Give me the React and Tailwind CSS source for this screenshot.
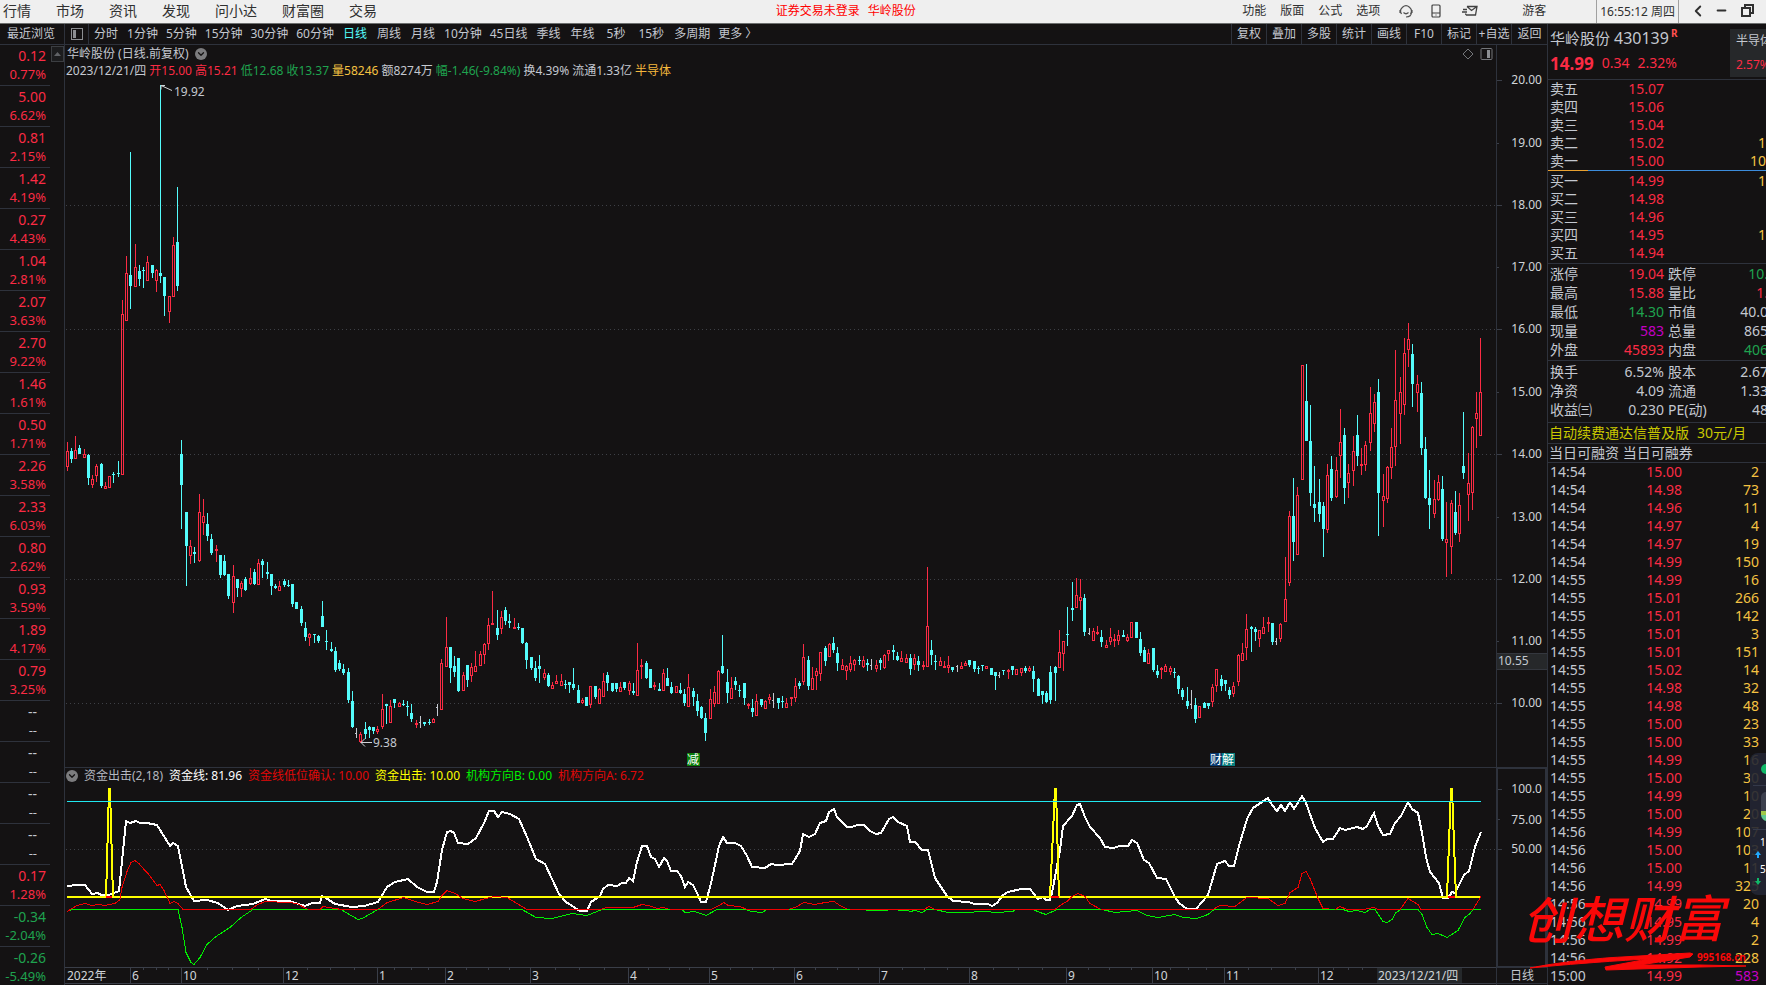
import { Fragment } from 'react'
import { ChevronDown, ChevronLeft, Minus } from 'lucide-react'

const MENU = ['行情', '市场', '资讯', '发现', '问小达', '财富圈', '交易']
const MENU_RIGHT = ['功能', '版面', '公式', '选项']

const PERIODS = [
  '分时', '1分钟', '5分钟', '15分钟', '30分钟', '60分钟', '日线', '周线', '月线',
  '10分钟', '45日线', '季线', '年线', '5秒', '15秒', '多周期', '更多 〉',
]
const ROOMY = ['分时', '日线', '周线', '月线', '季线', '年线']
const TOOLS = ['复权', '叠加', '多股', '统计', '画线', 'F10', '标记', '+自选', '返回']

const RECENT = [
  ['0.12', '0.77%'], ['5.00', '6.62%'], ['0.81', '2.15%'], ['1.42', '4.19%'],
  ['0.27', '4.43%'], ['1.04', '2.81%'], ['2.07', '3.63%'], ['2.70', '9.22%'],
  ['1.46', '1.61%'], ['0.50', '1.71%'], ['2.26', '3.58%'], ['2.33', '6.03%'],
  ['0.80', '2.62%'], ['0.93', '3.59%'], ['1.89', '4.17%'], ['0.79', '3.25%'],
  ['--', '--'], ['--', '--'], ['--', '--'], ['--', '--'],
  ['0.17', '1.28%'], ['-0.34', '-2.04%'], ['-0.26', '-5.49%'],
]

const QUOTE = [
  ['2023/12/21/四', 'text-[#c4c8d0]'],
  ['开15.00', 'text-[#fb2b44]'],
  ['高15.21', 'text-[#fb2b44]'],
  ['低12.68', 'text-[#1fa34f]'],
  ['收13.37', 'text-[#1fa34f]'],
  ['量58246', 'text-[#f5c242]'],
  ['额8274万', 'text-[#c4c8d0]'],
  ['幅-1.46(-9.84%)', 'text-[#1fa34f]'],
  ['换4.39%', 'text-[#c4c8d0]'],
  ['流通1.33亿', 'text-[#c4c8d0]'],
  ['半导体', 'text-[#f5b83d]'],
]

const INDICATORS = [
  ['资金出击(2,18)', 'text-[#b4b8c0]'],
  ['资金线: 81.96', 'text-white'],
  ['资金线低位确认: 10.00', 'text-[#e00808]'],
  ['资金出击: 10.00', 'text-[#ffff00]'],
  ['机构方向B: 0.00', 'text-[#00f000]'],
  ['机构方向A: 6.72', 'text-[#e00808]'],
]

const SELLS = [['卖五', '15.07', ''], ['卖四', '15.06', ''], ['卖三', '15.04', ''], ['卖二', '15.02', '1'], ['卖一', '15.00', '10']]
const BUYS = [['买一', '14.99', '1'], ['买二', '14.98', ''], ['买三', '14.96', ''], ['买四', '14.95', '1'], ['买五', '14.94', '']]

const RED = 'text-[#fb2b44]'
const GREEN = 'text-[#1fa34f]'
const GREY = 'text-[#c4c8d0]'

const STATS = [
  ['涨停', '19.04', RED, '跌停', '10.', GREEN],
  ['最高', '15.88', RED, '量比', '1.', RED],
  ['最低', '14.30', GREEN, '市值', '40.0', GREY],
  ['现量', '583', 'text-[#c400c4]', '总量', '865', GREY],
  ['外盘', '45893', RED, '内盘', '406', GREEN],
]
const FUNDAMENTALS = [
  ['换手', '6.52%', GREY, '股本', '2.67', GREY],
  ['净资', '4.09', GREY, '流通', '1.33', GREY],
  ['收益㈢', '0.230', GREY, 'PE(动)', '48', GREY],
]

const TICKS = [
  ['14:54', '15.00', 2], ['14:54', '14.98', 73], ['14:54', '14.96', 11], ['14:54', '14.97', 4],
  ['14:54', '14.97', 19], ['14:54', '14.99', 150], ['14:55', '14.99', 16], ['14:55', '15.01', 266],
  ['14:55', '15.01', 142], ['14:55', '15.01', 3], ['14:55', '15.01', 151], ['14:55', '15.02', 14],
  ['14:55', '14.98', 32], ['14:55', '14.98', 48], ['14:55', '15.00', 23], ['14:55', '15.00', 33],
  ['14:55', '14.99', 16], ['14:55', '15.00', 30], ['14:55', '14.99', 10], ['14:55', '15.00', 20],
  ['14:56', '14.99', 107], ['14:56', '15.00', 103], ['14:56', '15.00', 11], ['14:56', '14.99', 325],
  ['14:56', '14.99', 20], ['14:56', '14.95', 4], ['14:56', '14.99', 2], ['14:56', '14.92', 228],
  ['15:00', '14.99', 583],
]

// One candle per entry: direction (u up, d down, w unchanged), then high/body top/body bottom/low
const CANDLES = `
u442/451/467/471 d448/451/459/463 u436/450/459/459 d445/448/454/454 u449/454/458/458
d454/455/478/485 u475/479/485/488 u464/466/476/482 d463/464/486/488 u482/486/489/489
u476/476/488/488 d472/474/475/483 d461/473/474/477 u300/314/475/475 u256/273/321/321
d152/275/286/309 u244/267/287/287 d265/271/279/286 d267/270/271/288 u256/262/281/281
d265/265/273/278 u269/270/281/292 d85/273/276/283 d277/277/296/316 u296/296/312/323
u237/245/297/297 d187/242/286/291 d440/454/485/529 d512/512/546/586 u540/546/556/564
d547/552/554/563 u494/512/561/562 u499/516/523/535 d513/524/536/541 d534/539/553/555
u545/549/550/562 d555/555/575/578 d555/561/575/576 d574/574/596/599 u565/576/603/613
d579/579/588/597 u581/583/589/597 d577/579/590/591 u568/578/584/585 d569/572/584/585
u559/563/585/585 d559/561/565/578 d562/572/574/579 d574/574/586/595 d584/586/588/589
u581/586/591/591 d579/581/585/587 d580/585/586/587 d584/584/604/607 d602/602/609/609
d606/609/623/626 d622/628/637/641 u633/634/638/646 d634/634/635/643 d635/636/641/643
d601/616/627/627 d630/641/642/650 d642/649/651/652 d647/651/670/672 d660/663/669/671
d664/669/673/675 d668/672/700/703 d691/701/727/728 w728/733/734/738 u732/734/742/743
d722/729/734/739 d726/727/730/738 d727/727/731/734 u726/729/732/734 u694/709/727/729
d704/704/706/724 u700/706/723/723 d699/699/703/708 u702/703/707/707 d700/704/705/706
d701/706/707/716 d704/713/719/722 u720/723/724/728 w716/722/723/728 d722/722/724/726
d719/722/723/725 u718/719/723/723 w704/707/708/716 u659/663/710/710 u617/647/667/667
d647/647/668/683 d656/666/672/677 d658/658/691/692 u672/675/691/691 d665/665/680/687
u663/667/676/682 u651/666/672/672 u651/654/666/666 u643/644/655/664 u618/625/644/650
u591/623/625/625 d610/628/635/640 u611/617/629/634 d607/610/621/625 d614/621/623/628
u618/627/629/629 d623/627/628/630 d628/628/643/644 d642/643/660/669 d657/657/668/670
d661/668/678/681 d655/666/669/683 u669/673/678/680 d673/675/686/687 u682/685/689/689
u675/681/684/684 u674/681/686/686 d680/684/685/689 d682/682/685/693 d668/684/688/690
d685/690/703/703 u698/700/703/704 d697/697/706/706 u686/686/705/708 d686/686/697/699
u688/689/704/704 u673/681/697/697 d672/675/683/691 d683/683/691/692 d683/683/689/692
u682/687/692/692 d682/682/688/690 u681/683/691/695 d683/691/693/695 u643/670/696/696
u659/665/667/679 d661/663/678/679 d669/669/688/688 u682/685/687/690 d683/689/691/691
u669/673/691/691 d668/678/686/686 d682/687/693/694 u686/686/693/693 d683/690/693/694
d689/694/703/706 u674/687/707/707 d688/691/697/706 d694/701/711/716 d706/707/718/719
d713/718/733/741 u689/699/719/719 u686/692/704/707 u670/671/704/704 d635/666/673/674
d669/682/693/703 u677/688/699/699 d677/681/685/690 d685/690/691/697 d683/683/698/705
u703/704/705/709 d699/708/712/717 u694/701/716/716 d699/699/705/707 u700/701/709/709
u694/697/700/704 w693/700/701/708 d698/698/703/709 d696/701/702/708 u698/703/708/708
u697/697/699/706 u678/686/698/702 d681/683/686/689 u644/657/682/685 d656/660/686/690
u667/678/690/690 u668/671/676/690 u652/652/674/681 d646/648/661/666 u643/644/657/657
d637/643/650/653 d647/653/663/671 u659/665/670/670 u665/666/671/680 u656/663/670/672
u659/660/665/671 d656/660/661/665 u656/660/667/668 d659/663/665/671 w659/665/666/670
u660/665/669/672 d658/660/663/670 u654/655/668/669 u650/650/654/661 d645/650/652/660
d652/656/660/661 u651/658/662/662 u654/658/663/663 d654/658/669/675 u654/658/665/670
d656/661/665/671 u661/665/667/670 u567/626/667/667 d640/650/655/665 d655/661/662/670
u657/661/666/666 u661/666/668/668 u656/665/668/673 d667/667/670/672 w665/666/667/672
u662/666/669/669 u661/663/666/666 d660/660/665/667 d661/661/669/672 d666/668/669/674
d665/665/666/671 u666/666/669/669 d668/668/675/675 d672/672/676/690 w672/675/676/678
d670/670/671/675 u669/670/671/679 d666/666/670/675 u669/669/675/675 u668/668/673/676
d666/668/671/673 u666/668/671/672 d666/671/679/692 d678/679/696/696 d691/691/695/704
d691/693/702/703 d666/672/700/704 d666/667/673/701 u630/652/668/668 u641/641/654/671
d607/634/635/646 d582/608/610/621 u578/595/608/608 u579/597/601/610 d594/598/632/636
w628/633/634/635 u628/631/641/641 u626/632/634/635 d630/637/642/647 u640/645/648/648
u628/637/642/645 u634/639/641/647 u630/635/641/645 d630/635/637/637 u634/637/641/642
u622/622/638/638 d622/622/638/638 d632/639/653/656 d647/650/662/662 u649/653/664/664
d648/648/670/672 d665/671/675/678 u667/668/670/679 u664/666/672/672 u666/668/672/675
d668/672/673/678 d675/676/689/694 d688/690/697/700 d687/701/706/709 w690/704/705/709
d698/705/719/723 u706/706/718/718 d702/703/708/708 d703/703/706/709 u684/687/702/707
u669/669/686/692 d675/679/686/691 d680/680/684/691 d687/690/695/699 u682/686/694/697
u654/655/682/686 u643/653/661/661 u614/629/648/660 d626/627/629/652 d627/629/632/641
u630/630/639/647 u617/627/634/634 u617/622/624/632 d623/623/642/645 w638/641/642/645
u623/624/639/642 u557/599/622/622 u511/516/583/586 d478/516/542/561 u487/495/555/555
u365/365/480/480 d364/401/441/441 d405/441/493/506 d466/504/508/522 d479/502/514/522
d502/506/529/557 u464/475/530/533 d456/469/498/501 u457/470/497/498 u409/442/456/478
d428/435/488/504 u464/473/483/498 u436/451/471/486 d415/435/456/466 u448/464/466/475
u441/445/465/471 u387/413/443/451 u394/402/424/432 d379/392/493/536 u474/496/501/527
u466/467/499/503 u428/447/468/479 u350/400/447/466 u377/392/414/444 u338/353/405/415
u323/339/350/367 d344/354/384/407 u375/384/393/412 d382/393/448/455 d437/449/498/499
d470/498/505/529 u480/499/514/518 u475/482/500/501 d476/489/539/541 u502/539/543/577
u500/503/547/574 d491/512/533/535 u493/505/534/542 d412/466/473/479 u453/483/495/521
u426/427/493/510 u392/413/419/448 u338/392/436/436
`.trim().split(/\s+/).map((c, i) => {
  const [high, top, bottom, low] = c.slice(1).split('/').map(Number)
  return { dir: c[0], x: Math.floor(67 + i * 4.259), high, top, bottom, low }
})

const CANDLE_COLORS = { u: '#fb2b44', d: '#54fcfc', w: '#c4c8d0' }

const FUND_LINE = `67,886 77,885 85,885 92,894 98,893 101,895 109,895 119,891 126,821 130,823 136,821 140,823 147,823 157,825
170,846 173,843 178,846 186,887 194,901 207,900 218,903 228,910 237,906 253,904 265,899 272,901 289,901 305,906 312,903
320,903 322,896 326,898 335,904 352,907 364,906 378,902 387,887 395,882 408,879 417,887 427,892 434,892 437,882 442,850
447,832 451,831 454,833 458,843 468,844 476,838 484,823 489,811 494,811 498,817 502,812 510,814 519,819 527,837 536,859
545,864 559,894 566,902 580,911 587,911 591,902 600,896 603,889 608,885 617,886 622,883 626,883 629,878 633,881 637,862
642,846 647,846 651,857 655,859 659,867 664,858 667,861 671,871 677,871 681,876 685,887 688,882 693,885 698,895 701,902
706,902 711,883 715,865 719,846 723,837 727,843 735,843 741,846 747,856 752,867 765,868 771,864 777,865 792,864 800,851
803,834 809,837 815,834 820,823 826,821 829,812 834,809 837,817 847,827 852,827 857,825 864,825 870,831 876,834 881,833
889,819 893,817 898,822 907,826 910,842 915,842 922,850 928,850 935,878 947,896 953,901 968,902 975,904 988,904 992,906
997,903 1003,895 1008,892 1021,889 1030,889 1038,899 1043,897 1046,900 1050,900 1052,893 1060,850 1063,826 1072,816
1077,805 1080,804 1085,817 1090,827 1100,838 1105,847 1113,848 1120,846 1128,846 1132,840 1137,843 1144,860 1149,863
1157,878 1166,879 1175,897 1179,903 1187,909 1196,909 1208,895 1217,864 1225,861 1229,866 1234,866 1239,846 1247,819
1253,808 1262,802 1268,798 1272,805 1277,811 1281,805 1285,811 1290,802 1294,809 1302,796 1306,803 1315,828 1323,842
1327,839 1333,839 1340,828 1345,830 1357,827 1363,829 1367,826 1374,813 1378,826 1383,835 1390,834 1395,823 1401,816
1408,802 1412,809 1418,813 1422,833 1426,857 1430,872 1439,883 1443,898 1448,898 1452,892 1455,893 1464,875 1469,871
1475,847 1481,832`

const DIRECTION_A = `67,911 77,905 85,903 92,905 98,904 105,905 115,903 120,899 122,887 127,871 131,862 135,860 139,863 144,869
148,873 157,885 160,884 164,890 170,903 174,901 178,903 183,909 251,909 256,905 265,901 289,902 297,903 308,909 320,909
323,906 335,908 342,909 378,909 387,902 404,897 415,901 427,904 438,901 442,895 447,890 455,893 463,898 475,901 486,898
494,896 507,897 517,903 527,909 600,909 607,907 633,907 642,904 648,905 658,908 663,907 670,909 711,909 719,905 724,902
728,905 740,906 747,909 789,909 797,906 804,902 815,904 825,902 834,901 840,905 848,909 924,909 929,906 935,909 1055,909
1060,905 1067,901 1072,896 1078,893 1085,896 1090,903 1101,909 1213,909 1220,905 1235,906 1247,897 1268,898 1278,905
1285,903 1290,892 1298,887 1302,873 1306,871 1310,878 1318,898 1323,908 1335,909 1340,906 1347,909 1363,909 1374,907
1378,909 1400,909 1408,898 1418,904 1421,909 1473,909 1481,896`

const DIRECTION_B = `67,911 72,909 178,909 182,927 186,952 191,962 194,964 200,957 207,944 216,936 230,927 241,917 253,909 341,909
346,912 358,919 362,918 378,909 522,909 536,917 552,918 572,913 587,915 602,909 682,909 685,912 695,911 706,915 717,909
745,909 752,911 762,912 767,909 865,909 867,910 887,910 888,909 908,910 910,911 915,910 922,912 927,909 935,909 948,912
962,912 987,911 995,912 1013,911 1015,909 1033,909 1040,912 1046,914 1057,909 1102,909 1115,912 1137,910 1147,915 1158,917
1175,914 1183,917 1197,918 1208,914 1214,909 1343,909 1349,911 1357,910 1365,912 1370,909 1375,909 1379,915 1383,921
1387,922 1392,919 1396,912 1401,909 1418,909 1422,914 1427,927 1432,934 1438,933 1447,937 1458,930 1465,917 1470,913
1473,909 1481,909`

const MONTHS = [
  [130, '6'], [181, '10'], [283, '12'], [377, '1'], [445, '2'], [530, '3'], [628, '4'], [709, '5'],
  [794, '6'], [879, '7'], [969, '8'], [1066, '9'], [1152, '10'], [1224, '11'], [1318, '12'],
]

const PRICES = [
  [80, '20.00'], [143, '19.00'], [205, '18.00'], [267, '17.00'], [329, '16.00'], [392, '15.00'],
  [454, '14.00'], [517, '13.00'], [579, '12.00'], [641, '11.00'], [703, '10.00'],
]

function TopBar() {
  return (
    <header className="flex h-6 shrink-0 items-center border-b border-[#6c6e6e] bg-[#efefef] pb-0.5 text-xs leading-none text-[#303030]">
      <nav className="flex grow-10 basis-0 gap-[25px] pl-[3px] text-sm leading-none">
        {MENU.map(m => <button key={m} type="button">{m}</button>)}
      </nav>
      <p className="flex gap-2 text-[#ff0000]">
        <span>证券交易未登录</span>
        <span>华岭股份</span>
      </p>
      <div className="flex grow-11 basis-0 items-center justify-end">
        <nav className="flex gap-3.5">
          {MENU_RIGHT.map(m => <button key={m} type="button">{m}</button>)}
        </nav>
        <button type="button" aria-label="客服" className="ml-[19px]">
          <svg width="14" height="14" viewBox="0 0 14 14" fill="none" stroke="#505050" strokeWidth="1.2">
            <path d="M2.500 10A5.300 5.300 0 1 1 11.500 10M12.500 8c0 3-2 5-5.500 5M4.500 8.500q2.500 2.500 5 0M1 6v3M13 6v3" />
          </svg>
        </button>
        <button type="button" aria-label="手机" className="ml-[18px]">
          <svg width="10" height="14" viewBox="0 0 10 14" fill="none" stroke="#404040" strokeWidth="1.2">
            <rect x="1" y="1" width="8" height="12" rx="1" />
            <path d="M1 9h8M4.500 11h1" />
          </svg>
        </button>
        <button type="button" aria-label="消息" className="ml-[21px]">
          <svg width="16" height="14" viewBox="0 0 16 14" fill="none" stroke="#404040" strokeWidth="1.3">
            <path d="M5 2.500h10L13.500 11H4M5 2.500l4.500 4 5.500-4M1 5.500h4M0 8h5M4 11l-.5-1.500" />
          </svg>
        </button>
        <button type="button" className="ml-11">游客</button>
        <time className="-mb-0.5 ml-[50px] flex h-[23px] items-center border-x border-[#a0a0a0] px-[3px]">16:55:12 周四</time>
        <button type="button" aria-label="后退" className="ml-2.5"><ChevronLeft size={18} strokeWidth={2.5} /></button>
        <button type="button" aria-label="最小化" className="ml-2"><Minus size={13} strokeWidth={4} /></button>
        <button type="button" aria-label="还原" className="mr-3 ml-[13px]">
          <svg width="13" height="13" viewBox="0 0 13 13" fill="none" stroke="#303030" strokeWidth="2">
            <path d="M4 4V1h8v8H9M1 4h8v8H1z" />
          </svg>
        </button>
      </div>
    </header>
  )
}

function periodClass(name) {
  if (name === '日线') return 'px-px text-[#54fcfc]'
  if (name === '5秒') return 'px-[3px]'
  if (name === '15秒') return 'px-0.5'
  return ROOMY.includes(name) ? 'px-px' : ''
}

function Toolbar() {
  return (
    <div className="flex h-[21px] shrink-0 items-stretch border-b border-[#2e323c] text-xs leading-none">
      <button type="button" className="w-16 pr-0.5 text-center">最近浏览</button>
      <button type="button" aria-label="侧栏" className="flex w-[25px] items-center justify-center border-x border-[#2e323c]">
        <svg width="12" height="12" viewBox="0 0 12 12" fill="none" stroke="#8c8e92" shapeRendering="crispEdges">
          <rect x="0.5" y="0.5" width="11" height="11" />
          <rect x="2" y="2" width="3" height="8" fill="#8c8e92" stroke="none" />
        </svg>
      </button>
      <nav className="flex flex-1 items-center gap-2 pl-1">
        {PERIODS.map(p => <button key={p} type="button" className={periodClass(p)}>{p}</button>)}
      </nav>
      <nav className="flex">
        {TOOLS.map(t => (
          <button key={t} type="button" className="w-[35px] border-l border-[#2e323c] whitespace-nowrap last:w-9">{t}</button>
        ))}
      </nav>
    </div>
  )
}

function tone(value) {
  if (value === '--') return 'pr-[13px] text-[#c4c8d0]'
  return value.startsWith('-') ? 'pr-1 text-[#1fa34f]' : 'pr-1 text-[#fb2b44]'
}

function RecentList() {
  return (
    <div className="flex w-16 shrink-0 justify-between overflow-hidden">
      <ul className="w-[50px] text-right">
        {RECENT.map(([change, pct], i) => (
          <li key={i} className={'h-[41px] border-b border-[#2e323c] pt-px ' + tone(change)}>
            <div className="text-sm leading-[19px]">{change}</div>
            <div className="text-[13px] leading-[19px]">{pct}</div>
          </li>
        ))}
      </ul>
      <button type="button" aria-label="向上" className="mt-px flex h-4 w-[13px] items-center justify-center border border-[#3c3e42] bg-[#1c1c1e]">
        <svg width="7" height="4" viewBox="0 0 7 4" fill="#606266"><path d="M0 4 3.500 0 7 4z" /></svg>
      </button>
    </div>
  )
}

function Candle({ dir, x, high, top, bottom, low }) {
  const color = CANDLE_COLORS[dir]
  if (dir === 'u') {
    return (
      <g stroke={color} fill="none">
        {high < top && <path d={`M${x + 0.5} ${high}V${top}`} />}
        {low > bottom && <path d={`M${x + 0.5} ${bottom}V${low}`} />}
        <rect x={x - 0.5} y={top + 0.5} width="2" height={Math.max(bottom - top - 1, 1)} />
      </g>
    )
  }
  return (
    <g fill={color}>
      <rect x={x} y={high} width="1" height={low - high} />
      <rect x={x - 1} y={top} width={dir === 'w' ? 1 : 3} height={Math.max(bottom - top, 1)} />
    </g>
  )
}

function PriceChart() {
  return (
    <svg viewBox="65 79 1431 688" preserveAspectRatio="none" className="min-h-0 w-full flex-1 text-xs">
      <g shapeRendering="crispEdges">
        {[205, 329, 454, 579, 703].map(y => (
          <path key={y} d={`M66 ${y}.5H1496`} stroke="#3e4046" strokeDasharray="1 3" />
        ))}
        {CANDLES.map((c, i) => <Candle key={i} {...c} />)}
      </g>
      <g stroke="#d0d2d6" fill="none">
        <path d="M161 85.500l11 5M161 85.500h4M161 85.500v4" />
        <path d="M361 742.500h11M361 742.500l4-4M361 742.500l4 4" />
      </g>
      <g fill="#c4c8d0">
        <text x="174" y="96">19.92</text>
        <text x="373" y="747">9.38</text>
      </g>
      <rect x="687" y="753" width="13" height="13" fill="#087c08" />
      <rect x="1210" y="753" width="12" height="13" fill="#083a70" />
      <rect x="1222" y="753" width="13" height="13" fill="#088080" />
      <g fill="#fff">
        <text x="687" y="764">减</text>
        <text x="1210" y="764">财</text>
        <text x="1222" y="764">解</text>
      </g>
    </svg>
  )
}

function FundChart() {
  return (
    <svg viewBox="65 784 1431 183" preserveAspectRatio="none" className="h-[183px] w-full shrink-0" fill="none">
      <g shapeRendering="crispEdges">
        <path d="M66 849.500H1496" stroke="#3e4046" strokeDasharray="1 3" />
        <polyline points={FUND_LINE} stroke="#fff" strokeWidth="2" />
        <path d="M67 897H1481" stroke="#ff0000" strokeWidth="2" />
        <path
          d="M67 897H106L109 789H110L113 897H1050L1055 789H1056L1059 897H1447L1451 789H1452L1456 897H1481"
          stroke="#ffff00"
          strokeWidth="2"
        />
        <path d="M106 897h6M1052 897h7M1449 897h6" stroke="#ff0000" strokeWidth="2" />
        <path d="M67 801.500H1481" stroke="#20e8f0" />
        <g transform="translate(0 .5)">
          <polyline points={DIRECTION_B} stroke="#00f000" />
          <polyline points={DIRECTION_A} stroke="#f00000" />
          <path d="M72 909H178M253 909H308M378 909H522M604 909H670M717 909H745M789 909H850M1057 909H1101M1214 909H1335M1401 909H1418M1473 909H1481" stroke="#00f000" />
        </g>
      </g>
    </svg>
  )
}

function DateAxis() {
  return (
    <svg viewBox="65 967 1431 18" preserveAspectRatio="none" className="h-[18px] w-full shrink-0 text-xs">
      <rect x="1377" y="968" width="85" height="15" fill="#25282b" />
      <g stroke="#3a3e48" shapeRendering="crispEdges">
        <path d="M65 967.500H1496M65 983.500H1496" />
        {MONTHS.map(([x], i) => (
          <Fragment key={x}>
            <path d={`M${x}.5 968V983`} />
            {[1, 2, 3].map(n => {
              const next = MONTHS[i + 1]?.[0] ?? 1377
              const tx = Math.round(x + ((next - x) * n) / 4)
              return <path key={n} d={`M${tx}.5 968v2`} />
            })}
          </Fragment>
        ))}
      </g>
      <g fill="#d0d4d8">
        <text x="67" y="980">2022年</text>
        {MONTHS.map(([x, label]) => <text key={x} x={x + 2} y="980">{label}</text>)}
        <text x="1378" y="980">2023/12/21/四</text>
      </g>
    </svg>
  )
}

function ValueAxis() {
  return (
    <div className="flex w-[51px] shrink-0 flex-col border-l border-[#2e323c]">
      <svg viewBox="1497 45 50 722" preserveAspectRatio="none" className="min-h-0 w-full flex-1 text-xs">
        <g stroke="#3a3e48" shapeRendering="crispEdges">
          {PRICES.map(([y], i) => <path key={y} d={`M1497 ${y}.5h${i % 2 ? 2 : 5}`} />)}
        </g>
        <g fill="#d0d4d8" textAnchor="end">
          {PRICES.map(([y, label]) => <text key={y} x="1542" y={y + 4}>{label}</text>)}
        </g>
        <rect x="1497" y="653" width="50" height="17" fill="#26282a" />
        <path d="M1497 653.500h50M1497 669.500h50" stroke="#34373e" />
        <text x="1498" y="665" fill="#c4c8d0">10.55</text>
      </svg>
      <div className="h-[201px] border-2 border-l-1 border-[#2e323c]">
        <svg viewBox="1498 769 47 197" preserveAspectRatio="none" className="h-full w-full text-xs">
          <path d="M1498 789.500h4M1498 819.500h2M1498 849.500h4" stroke="#3a3e48" />
          <g fill="#d0d4d8" textAnchor="end">
            <text x="1542" y="793">100.0</text>
            <text x="1542" y="824">75.00</text>
            <text x="1542" y="853">50.00</text>
          </g>
        </svg>
      </div>
      <div className="mb-px h-4 border-b border-[#2e323c] text-center text-xs leading-[15px]">日线</div>
    </div>
  )
}

function ChartArea() {
  return (
    <main className="flex min-w-0 flex-1 flex-col border-l border-[#2e323c] text-xs leading-none">
      <div className="flex h-[17px] shrink-0 items-center pr-[3px] pl-0.5">
        <h1>华岭股份 (日线.前复权)</h1>
        <button type="button" aria-label="展开" className="ml-1.5 rounded-full bg-[#7c7c7e] p-px text-[#141213]">
          <ChevronDown size={10} strokeWidth={3} />
        </button>
        <svg width="31" height="12" viewBox="0 0 31 12" fill="none" stroke="#74767a" className="ml-auto">
          <path d="M1 6 6 1l5 5-5 5z" />
          <rect x="19" y="0.5" width="11" height="11" rx="1" />
          <rect x="25" y="2" width="3" height="8" fill="#8c8e92" stroke="none" />
        </svg>
      </div>
      <p className="flex h-[17px] shrink-0 items-center gap-[3px] pl-px whitespace-nowrap">
        {QUOTE.map(([text, color]) => <span key={text} className={color}>{text}</span>)}
      </p>
      <PriceChart />
      <div className="flex h-[17px] shrink-0 items-center gap-1.5 border-t border-[#2e323c] pl-px whitespace-nowrap">
        <button type="button" aria-label="指标" className="rounded-full bg-[#7c7c7e] p-px text-[#141213]">
          <ChevronDown size={10} strokeWidth={3} />
        </button>
        {INDICATORS.map(([text, color]) => <span key={text} className={color}>{text}</span>)}
      </div>
      <FundChart />
      <DateAxis />
    </main>
  )
}

function OrderTable({ rows }) {
  return (
    <table className="w-full table-fixed text-sm leading-[18px]">
      <tbody>
        {rows.map(([label, price, qty]) => (
          <tr key={label}>
            <th className="w-[52px] p-0 pl-0.5 text-left font-normal">{label}</th>
            <td className="w-16 p-0 text-right text-[#fb2b44]">{price}</td>
            <td className="p-0 text-right text-[#f5c242]">{qty}</td>
          </tr>
        ))}
      </tbody>
    </table>
  )
}

function StatTable({ rows }) {
  return (
    <table className="w-full table-fixed text-sm leading-[19px] whitespace-nowrap">
      <tbody>
        {rows.map(([label, value, color, label2, value2, color2]) => (
          <tr key={label}>
            <th className="w-[52px] p-0 pl-0.5 text-left font-normal">{label}</th>
            <td className={'w-16 p-0 text-right ' + color}>{value}</td>
            <th className="w-[52px] p-0 pl-1 text-left font-normal">{label2}</th>
            <td className={'p-0 text-right ' + color2}><span className="-mr-0.5">{value2}</span></td>
          </tr>
        ))}
      </tbody>
    </table>
  )
}

function QuotePanel() {
  return (
    <aside className="w-[219px] shrink-0 overflow-hidden border-l border-[#2e323c]">
      <div className="flex h-14 justify-between border-b border-[#2e323c] pl-0.5">
        <div className="pt-1">
          <h2 className="flex h-5 items-center text-[15px] leading-none">
            华岭股份<span className="ml-1 text-base leading-none">430139</span>
            <sup className="ml-0.5 text-[10px] font-bold text-[#ff5050]">R</sup>
          </h2>
          <p className="mt-[3px] flex h-6 items-center gap-2 text-sm leading-none text-[#fb2b44]">
            <strong className="text-[17px]">14.99</strong>
            <span>0.34</span>
            <span>2.32%</span>
          </p>
        </div>
        <div className="mt-[5px] h-12 w-9 overflow-hidden bg-[#26282a] pl-1.5 text-xs leading-6 whitespace-nowrap">
          <div>半导体</div>
          <div className="text-[#fb2b44]">2.57%</div>
        </div>
      </div>
      <OrderTable rows={SELLS} />
      <div className="flex h-px"><div className="w-10 bg-[#e8a030]" /><div className="flex-1 bg-[#3c8cdc]" /></div>
      <div className="border-b border-[#2e323c] py-px"><OrderTable rows={BUYS} /></div>
      <div className="border-b border-[#2e323c] pb-px"><StatTable rows={STATS} /></div>
      <div className="border-b border-[#2e323c] pt-px pb-[3px]"><StatTable rows={FUNDAMENTALS} /></div>
      <a href="#renew" className="flex h-[21px] items-center gap-2 border-b border-[#2e323c] pl-px text-sm leading-none whitespace-nowrap text-[#c8c800]">
        <span>自动续费通达信普及版</span>
        <span>30元/月</span>
      </a>
      <p className="flex h-[19px] items-center border-b border-[#2e323c] pl-px text-sm leading-none">当日可融资 当日可融券</p>
      <table className="w-full table-fixed text-sm leading-[18px]">
        <tbody>
          {TICKS.map(([time, price, qty], i) => (
            <tr key={i}>
              <td className="w-[52px] p-0 pl-0.5">{time}</td>
              <td className="w-[82px] p-0 text-right text-[#fb2b44]">{price}</td>
              <td className={'p-0 pr-[7px] text-right ' + (qty === 583 ? 'text-[#c400c4]' : 'text-[#f5c242]')}>{qty}</td>
            </tr>
          ))}
        </tbody>
      </table>
    </aside>
  )
}

function NetMonitor() {
  return (
    <div className="absolute right-0 bottom-[90px] h-[142px] w-4 overflow-hidden rounded-l-lg bg-[#222634]/90 text-[10px] text-white">
      <svg width="16" height="142" viewBox="0 0 16 142">
        <circle cx="16" cy="16" r="5" fill="#10b868" />
        <path d="M3 32.500h13M3 76.500h13" stroke="#34394a" />
        <path d="M16 39a5 5 0 0 0-5 5v14h5z" fill="#3c404e" />
        <path d="M11 58h5v10a7 7 0 0 1-5-6z" fill="#60c890" />
        <path d="M11 58h5v4h-5z" fill="#a0c848" />
        <text x="10" y="93" fill="#fff">1</text>
        <path d="M8 98l3 4H9v3H7v-3H5z" fill="#20a8ff" />
        <text x="10" y="120" fill="#fff">5</text>
        <path d="M8 132l3-4H9v-3H7v3H5z" fill="#10b868" />
      </svg>
    </div>
  )
}

function Watermark() {
  return (
    <svg width="234" height="84" viewBox="1516 890 234 84" className="pointer-events-none absolute right-4 bottom-[11px]" fill="#fa0808">
      <text x="1522 1574 1624 1674" y="939 938 938 937" fontSize="50" fontWeight="500" fontStyle="italic">创想财富</text>
      <path d="M1530 968C1560 962 1600 958 1622 957L1690 953 1693 954 1690 957 1640 965 1700 965 1746 966 1700 967 1606 970 1605 967 1648 959C1610 961 1560 965 1530 968z" stroke="#fa0808" />
      <text x="1697" y="961" fontSize="10" fontWeight="700">995168.cn</text>
    </svg>
  )
}

export default function App() {
  return (
    <div className="relative flex h-screen flex-col overflow-hidden bg-[#141213] font-['Noto_Sans','Noto_Sans_CJK_SC',sans-serif] text-[#c4c8d0]">
      <TopBar />
      <div className="flex min-h-0 flex-1">
        <div className="flex min-w-0 flex-1 flex-col">
          <Toolbar />
          <div className="flex min-h-0 flex-1">
            <RecentList />
            <ChartArea />
            <ValueAxis />
          </div>
        </div>
        <QuotePanel />
      </div>
      <NetMonitor />
      <Watermark />
    </div>
  )
}
